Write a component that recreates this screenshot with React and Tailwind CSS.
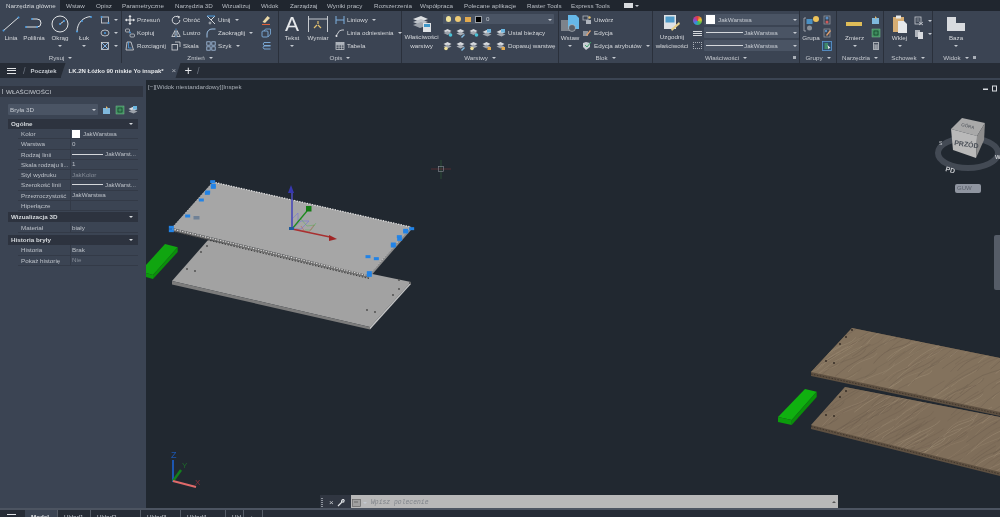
import React from "react";

const S = ({ w = 10, h = 10, vb, className = "", children }) => (
  <svg width={w} height={h} viewBox={vb || `0 0 ${w} ${h}`} className={"shrink-0 " + className} fill="none">{children}</svg>
);
const Caret = ({ className = "" }) => <span className={"inline-block w-0 h-0 border-x-[2px] border-x-transparent border-t-[2px] border-t-[#c5cad1] " + className} />;

const ic = {
  rect: <><rect x="1.5" y="2" width="7" height="6" stroke="#d5d8dc" strokeWidth=".8" /><circle cx="1.5" cy="2" r="1" fill="#4a9be0" /><circle cx="8.5" cy="8" r="1" fill="#4a9be0" /></>,
  ell: <><ellipse cx="5" cy="5" rx="4" ry="3" stroke="#d5d8dc" strokeWidth=".8" /><circle cx="5" cy="5" r="1" fill="#4a9be0" /></>,
  hatch: <><rect x="1.5" y="1.5" width="7" height="7" stroke="#d5d8dc" strokeWidth=".8" /><path d="M2 8l6-6M2 2l6 6" stroke="#7fb0e0" strokeWidth="1" /></>,
  move: <><path d="M5 .5v9M.5 5h9" stroke="#e5e7ea" strokeWidth="1.1" /><path d="M5 0l1.6 2H3.4zM5 10l1.6-2H3.4zM0 5l2-1.6v3.2zM10 5L8 3.4v3.2z" fill="#e5e7ea" /></>,
  copy: <><rect x=".5" y="1" width="4" height="3" rx="1" stroke="#d5d8dc" strokeWidth=".7" /><rect x="5" y="6" width="4.5" height="3" rx="1" stroke="#d5d8dc" strokeWidth=".7" /><circle cx="5" cy="4.5" r=".9" fill="#4a9be0" /></>,
  stretch: <><path d="M2 1h4l2.5 8H1z" stroke="#d5d8dc" strokeWidth=".8" /><path d="M3.5 1v6h3" stroke="#4a9be0" strokeWidth=".8" /></>,
  rotate: <><path d="M7.8 2.6A3.8 3.8 0 1 0 8.8 5" stroke="#d5d8dc" strokeWidth="1" /><path d="M6 .5l3 1-1 2.6z" fill="#d5d8dc" /></>,
  mirror: <><path d="M5 .5v9" stroke="#4a9be0" strokeWidth=".8" strokeDasharray="1.5 1" /><path d="M4 2.5v6H.8zM6 2.5v6h3.2z" stroke="#d5d8dc" strokeWidth=".8" /></>,
  scale: <><rect x="1" y="3.5" width="5.5" height="5.5" stroke="#d5d8dc" strokeWidth=".8" /><path d="M4 1h5v5" stroke="#d5d8dc" strokeWidth=".8" /></>,
  trim: <><path d="M1 1l4 4 4 4M9 1L5 5" stroke="#d5d8dc" strokeWidth="1" /><path d="M1 1h8" stroke="#4a9be0" strokeWidth="1" /><circle cx="4" cy="8" r="1" stroke="#d5d8dc" strokeWidth=".7" /></>,
  fillet: <path d="M1 9.5V6a5 5 0 0 1 5-5h3.5" stroke="#9fc2e6" strokeWidth="1" />,
  array: <><rect x=".8" y=".8" width="3.4" height="3.4" stroke="#a8c4e4" strokeWidth=".8" /><rect x="5.8" y=".8" width="3.4" height="3.4" stroke="#a8c4e4" strokeWidth=".8" /><rect x=".8" y="5.8" width="3.4" height="3.4" stroke="#a8c4e4" strokeWidth=".8" /><rect x="5.8" y="5.8" width="3.4" height="3.4" stroke="#a8c4e4" strokeWidth=".8" /></>,
  eraser: <><path d="M1.5 7l5-6 2.5 2-5 5z" fill="#ecd9a8" /><path d="M1 9.5h8" stroke="#e0603a" strokeWidth="1.1" /></>,
  cube: <><rect x="1" y="3" width="6" height="6" rx="1" stroke="#7fb0e0" strokeWidth=".9" /><path d="M3 3l1.5-2H9.5v5L7 9" stroke="#7fb0e0" strokeWidth=".8" /></>,
  off: <path d="M9.5 1.5H3a2 2 0 0 0 0 3h6.5M9.5 5H3a2 2 0 0 0 0 3h6.5" stroke="#7fb0e0" strokeWidth=".9" />,
  dimline: <><path d="M1 1v8M9 5H1" stroke="#7fb0e0" strokeWidth="1" /><path d="M9 1v8" stroke="#7fb0e0" strokeWidth="1" /></>,
  leader: <><path d="M1 8l2-3q1-3 4-3h2" stroke="#d5d8dc" strokeWidth=".9" /><circle cx="1.5" cy="8" r="1" fill="#e5e7ea" /></>,
  table: <><rect x="1" y="1.5" width="8" height="7" stroke="#d5d8dc" strokeWidth=".7" /><path d="M1 4h8M1 6.2h8M4 1.5v7M6.6 1.5v7" stroke="#d5d8dc" strokeWidth=".6" /><rect x="1" y="1.5" width="8" height="2.4" fill="#aeb4bc" /></>,
  block: <><rect x="1" y="1" width="5" height="4" stroke="#aeb4bc" strokeWidth=".8" /><rect x="4" y="5" width="5" height="4" fill="#aeb4bc" /><circle cx="7.5" cy="2.5" r="1.2" fill="#e2c070" /></>,
  blockEd: <><rect x="1" y="3" width="5" height="5" fill="#8f959d" /><path d="M4 7l4-5 1 1-4 5z" fill="#e0a070" /></>,
  attr: <><path d="M1 2l3-1 4 1v4l-4 3-3-3z" fill="#c9ced4" /><path d="M3 4l2 2 4-5" stroke="#3ea36a" strokeWidth="1" /></>,
  grpA: <><rect x="2" y="1" width="6" height="8" stroke="#8f959d" strokeWidth=".8" /><circle cx="5" cy="3" r="1.5" fill="#5a8fc4" /><circle cx="5" cy="7" r="1.5" fill="#d05a5a" /></>,
  grpB: <><rect x="2" y="1" width="6" height="8" stroke="#8f959d" strokeWidth=".8" /><path d="M4 7l4-5 1 1-4 5z" fill="#e0a070" /><circle cx="4" cy="3" r="1.2" fill="#5a8fc4" /></>,
  grpC: <><rect x=".5" y=".5" width="9" height="9" fill="#2f4d6b" stroke="#5b9ad6" strokeWidth=".8" /><rect x="2.5" y="2" width="3.5" height="6" fill="#3f8a6a" /><path d="M5.5 4l3 3-1.3.2-.7 1.4z" fill="#eee" /></>,
  idA: <><path d="M1 3h7v6H1z" fill="#7fb8dd" /><path d="M4 1l2 2-2 1z" fill="#e2b36a" /></>,
  idB: <><rect x="1" y="1" width="8" height="8" fill="#3c8a5c" stroke="#78c08f" strokeWidth=".5" /><path d="M3 3h4v4H3z" stroke="#16402a" strokeWidth=".7" /></>,
  calc: <><rect x="2" y="1" width="6" height="8" fill="#a8adb4" /><rect x="3" y="2" width="4" height="1.5" fill="#4a5260" /><path d="M3 5h4M3 7h4" stroke="#4a5260" strokeWidth=".8" strokeDasharray="1 .6" /></>,
  cutA: <><rect x="1" y="1" width="6" height="7" fill="none" stroke="#c8ccd2" strokeWidth=".8" /><path d="M2.5 3h3M2.5 5h3" stroke="#c8ccd2" strokeWidth=".6" /><path d="M5 6l4 3M9 6L5 9" stroke="#c8ccd2" strokeWidth=".8" /></>,
  cutB: <><rect x="1" y="1" width="5" height="7" fill="#aeb3ba" /><rect x="4" y="3" width="5" height="7" fill="#d8dbdf" /></>,
  layA: <><path d="M.5 3l4-2 4 2-4 2z" fill="#d8dbdf" /><path d="M.5 5l4-2 4 2-4 2z" fill="#9da3ab" /><circle cx="7.5" cy="7" r="1.8" fill="#49c2d6" /></>,
  layB: <><path d="M.5 3l4-2 4 2-4 2z" fill="#d8dbdf" /><path d="M.5 5.5l4-2 4 2-4 2z" fill="#a9aeb5" /><path d="M5 9l3-3 1 1-3 3z" fill="#7fb8dd" /></>,
  layC: <><path d="M.5 3l4-2 4 2-4 2z" fill="#d8dbdf" /><path d="M.5 5.5l4-2 4 2-4 2z" fill="#9da3ab" /><circle cx="3" cy="7.5" r="1.8" fill="#efe09a" /></>,
  layD: <><path d="M.5 3l4-2 4 2-4 2z" fill="#d8dbdf" /><path d="M.5 5.5l4-2 4 2-4 2z" fill="#9da3ab" /><rect x="5.5" y="6" width="3.5" height="3" fill="#e1a94e" /></>,
  layE: <><path d="M.5 4l4-2 5 2-4 2z" fill="#d8dbdf" /><path d="M.5 6.5l4-2 5 2-4 2z" fill="#9da3ab" /><rect x="5" y="1" width="4" height="3.5" fill="#6bb6e0" /></>,
};
const Ic = ({ n, w = 10, h = 10 }) => <S w={w} h={h} vb="0 0 10 10">{ic[n]}</S>;

const Small = ({ n, label, caret, className = "" }) => (
  <div className={"flex items-center h-[13px] " + className}>
    <Ic n={n} />
    {label && <span className="ml-[2px] whitespace-nowrap text-[#d4d7db]">{label}</span>}
    {caret && <Caret className="ml-[4px]" />}
  </div>
);
const Big = ({ icon, label, caret, className = "" }) => (
  <div className={"flex flex-col items-center shrink-0 " + className}>
    <div className="h-[19px] flex items-center justify-center">{icon}</div>
    <div className={"text-center text-[#d4d7db] whitespace-pre " + (label.includes("\n") ? "leading-[9px] -mt-[1px]" : "leading-[8.5px] mt-[1px]")}>{label}</div>
    {caret && <Caret className="mt-[2px]" />}
  </div>
);

const Panel = ({ className, title, dlg, children }) => (
  <div className={"shrink-0 flex flex-col h-full border-r border-[#2a303b] " + className}>
    <div className="h-[41px] flex pt-[3px] overflow-visible">{children}</div>
    <div className="h-[11px] flex items-center justify-center text-[#c5c9cf] relative">
      <span>{title}</span><Caret className="ml-[4px]" />
      {dlg && <span className="absolute right-[3px] top-[4px] w-[3px] h-[3px] bg-[#a9afb7]" />}
    </div>
  </div>
);

const Combo = ({ className = "", children }) => (
  <div className={"h-[11px] bg-[#4a5464] rounded-[1px] flex items-center relative text-[#c5cad1] " + className}>
    {children}
    <Caret className="absolute right-[2px] top-[4.5px]" />
  </div>
);
const Line = ({ className }) => <span className={"inline-block h-px bg-[#d5d8dc] " + className} />;

const Tabs = () => {
  const t = [["Narzędzia główne", "w-[60px]", true], ["Wstaw", "w-[30px]"], ["Opisz", "w-[26px]"], ["Parametryczne", "w-[53px]"], ["Narzędzia 3D", "w-[47px]"], ["Wizualizuj", "w-[39px]"], ["Widok", "w-[29px]"], ["Zarządzaj", "w-[37px]"], ["Wyniki pracy", "w-[47px]"], ["Rozszerzenia", "w-[46px]"], ["Współpraca", "w-[44px]"], ["Polecane aplikacje", "w-[63px]"], ["Raster Tools", "w-[44px]"], ["Express Tools", "w-[53px]"]];
  return (
    <div className="h-[11px] bg-[#20262f] flex shrink-0 text-[#b9bec5]">
      {t.map(([l, w, a]) => (
        <div key={l} className={"h-full pl-[6px] leading-[11px] whitespace-nowrap " + w + (a ? " bg-[#3b4453] text-[#d4d8dc]" : "")}>{l}</div>
      ))}
      <div className="flex items-center pl-[6px] gap-[2px]"><span className="w-[9px] h-[5px] bg-[#d8dbdf]" /><Caret /></div>
    </div>
  );
};

const Ribbon = () => (
  <div className="h-[52px] bg-[#3b4453] flex shrink-0 overflow-hidden">
    <Panel className="w-[122px]" title="Rysuj">
      <div className="flex w-[97px] pl-[1px]">
        <Big className="w-[20px]" label="Linia" icon={<S w={20} h={18}><path d="M2 16L18 2" stroke="#dfe2e5" /><circle cx="2.5" cy="15.5" r="1" fill="#4a9be0" /><circle cx="17.5" cy="2.5" r="1" fill="#4a9be0" /></S>} />
        <Big className="w-[26px]" label="Polilinia" icon={<S w={20} h={14}><path d="M2 10h11a4 4 0 0 0 0-8H8" stroke="#dfe2e5" /><circle cx="2" cy="10" r="1" fill="#4a9be0" /><circle cx="13" cy="10" r="1" fill="#4a9be0" /><circle cx="8" cy="2" r="1" fill="#4a9be0" /></S>} />
        <Big className="w-[26px]" label="Okrąg" caret icon={<S w={18} h={18}><circle cx="9" cy="9" r="8" stroke="#dfe2e5" /><path d="M9 9l4-3" stroke="#dfe2e5" /><circle cx="9" cy="9" r="1" fill="#4a9be0" /><circle cx="13" cy="6" r="1" fill="#4a9be0" /></S>} />
        <Big className="w-[20px] ml-[1px]" label="Łuk" caret icon={<S w={18} h={18}><path d="M2 17C2 8 8 2 16 1.5" stroke="#dfe2e5" /><circle cx="2" cy="16.5" r="1" fill="#4a9be0" /><circle cx="7" cy="6" r="1" fill="#4a9be0" /><circle cx="16" cy="2" r="1" fill="#4a9be0" /></S>} />
      </div>
      <div className="flex flex-col pl-[3px]">
        <Small n="rect" caret /><Small n="ell" caret /><Small n="hatch" caret />
      </div>
    </Panel>
    <Panel className="w-[157px]" title="Zmień">
      <div className="flex flex-col w-[48px] pl-[3px]">
        <Small n="move" label="Przesuń" /><Small n="copy" label="Kopiuj" /><Small n="stretch" label="Rozciągnij" />
      </div>
      <div className="flex flex-col w-[36px] pl-[1px]">
        <Small n="rotate" label="Obróć" /><Small n="mirror" label="Lustro" /><Small n="scale" label="Skala" />
      </div>
      <div className="flex flex-col w-[55px]">
        <Small n="trim" label="Utnij" caret /><Small n="fillet" label="Zaokrąglij" caret /><Small n="array" label="Szyk" caret />
      </div>
      <div className="flex flex-col">
        <Small n="eraser" /><Small n="cube" /><Small n="off" />
      </div>
    </Panel>
    <Panel className="w-[123px]" title="Opis">
      <Big className="w-[24px] ml-[1px]" label="Tekst" caret icon={<span className="text-[21px] leading-[19px] text-[#e6e8eb] font-['Liberation_Sans',sans-serif]">A</span>} />
      <Big className="w-[28px]" label="Wymiar" icon={<S w={22} h={18}><path d="M1.5 1v16M20.5 1v16M1.5 4h19" stroke="#d5d8dc" strokeWidth=".9" /><path d="M7 13l3-3M14 13l-3-3M11 9v-3" stroke="#e2c070" strokeWidth="1.2" /></S>} />
      <div className="flex flex-col pl-[3px]">
        <Small n="dimline" label="Liniowy" caret /><Small n="leader" label="Linia odniesienia" caret /><Small n="table" label="Tabela" />
      </div>
    </Panel>
    <Panel className="w-[157px]" title="Warstwy">
      <Big className="w-[39px]" label={"Właściwości\nwarstwy"} icon={<S w={20} h={20} className="-mt-[3px]"><path d="M1 7l8-3 7 3-8 3z" fill="#dcdfe2" /><path d="M1 10l8-3 7 3-8 3z" fill="#bcc1c7" /><path d="M1 13l8-3 7 3-8 3z" fill="#9da3ab" /><rect x="11" y="11" width="8" height="9" fill="#dfe2e5" /><rect x="12" y="12" width="6" height="3" fill="#3e97c9" /></S>} />
      <div className="flex flex-col ml-[2px]">
        <Combo className="w-[111px] bg-[#4a5464] gap-[3px] pl-[3px]">
          <span className="w-[5px] h-[6px] rounded-full bg-[#f1e39b]" />
          <span className="ml-[1px] w-[6px] h-[6px] rounded-full bg-[#eeca74]" />
          <span className="ml-[1px] w-[6px] h-[5px] bg-[#e1a94e]" />
          <span className="ml-[1px] w-[7px] h-[7px] bg-black border border-[#9aa0a8]" />
          <span className="ml-[1px]">0</span>
        </Combo>
        <div className="flex mt-[2px]">
          <div className="w-[64px] flex flex-col">
            <div className="flex h-[13px] items-center gap-[3px]"><Ic n="layA" /><Ic n="layB" /><Ic n="layA" /><Ic n="layE" /></div>
            <div className="flex h-[13px] items-center gap-[3px]"><Ic n="layC" /><Ic n="layB" /><Ic n="layC" /><Ic n="layD" /></div>
          </div>
          <div className="flex flex-col -ml-[11px]">
            <Small n="layE" label="Ustal bieżący" /><Small n="layD" label="Dopasuj warstwę" />
          </div>
        </div>
      </div>
    </Panel>
    <Panel className="w-[94px]" title="Blok">
      <Big className="w-[22px]" label="Wstaw" caret icon={<S w={18} h={18}><rect x="0" y="5" width="11" height="11" fill="#7d838b" /><path d="M7 0h8l3 3v11H7z" fill="#66b8e8" /><circle cx="11" cy="13" r="3.5" fill="#5a6069" stroke="#d5d8dc" strokeWidth=".5" /></S>} />
      <div className="flex flex-col pl-[1px]">
        <Small n="block" label="Utwórz" /><Small n="blockEd" label="Edycja" /><Small n="attr" label="Edycja atrybutów" caret />
      </div>
    </Panel>
    <Panel className="w-[147px]" title="Właściwości" dlg>
      <Big className="w-[38px]" label={"Uzgodnij\nwłaściwości"} icon={<S w={18} h={18} className="-mt-[2px]"><rect x="1" y="1" width="12" height="14" fill="#dfe2e5" /><rect x="2.5" y="2.5" width="9" height="6" fill="#4f9bc9" /><path d="M9 17l8-7-1-2-8 7z" fill="#e9d08a" /></S>} />
      <div className="flex flex-col w-[12px] items-center">
        <div className="h-[13px] flex items-center"><span className="w-[9px] h-[9px] rounded-full bg-[conic-gradient(#e04040,#e8c030,#40c050,#3090e0,#a040c0,#e04040)]" /></div>
        <div className="h-[13px] flex flex-col justify-center gap-[1px]"><Line className="w-[9px] block" /><Line className="w-[9px] block" /><Line className="w-[9px] block" /></div>
        <div className="h-[13px] flex items-center"><span className="w-[9px] h-[7px] border border-dotted border-[#a9afb7]" /></div>
      </div>
      <div className="flex flex-col gap-[2px] ml-[1px]">
        <Combo className="w-[95px] pl-[2px] gap-[3px]"><span className="w-[9px] h-[9px] bg-white" /><span>JakWarstwa</span></Combo>
        <Combo className="w-[95px] pl-[2px] gap-[1px]"><Line className="w-[37px]" /><span>JakWarstwa</span></Combo>
        <Combo className="w-[95px] pl-[2px] gap-[1px]"><Line className="w-[37px]" /><span>JakWarstwa</span></Combo>
      </div>
    </Panel>
    <Panel className="w-[37px]" title="Grupy">
      <Big className="w-[22px]" label="Grupa" icon={<S w={17} h={18}><path d="M3 3H1v13h2M13 3h2" stroke="#aeb3ba" strokeWidth=".8" /><rect x="3.5" y="4" width="6" height="5" fill="#4a90c4" /><circle cx="6.5" cy="13" r="2.5" fill="#8a9098" /><circle cx="13" cy="4" r="3" fill="#eec35a" /></S>} />
      <div className="flex flex-col">
        <div className="h-[13px] flex items-center"><Ic n="grpA" /></div>
        <div className="h-[13px] flex items-center"><Ic n="grpB" /></div>
        <div className="h-[13px] flex items-center"><Ic n="grpC" /></div>
      </div>
    </Panel>
    <Panel className="w-[47px]" title="Narzędzia">
      <Big className="w-[33px] ml-[1px]" label="Zmierz" caret icon={<S w={17} h={6}><rect width="16" height="4" y="1" fill="#e0bd58" /></S>} />
      <div className="flex flex-col">
        <div className="h-[13px] flex items-center"><Ic n="idA" /></div>
        <div className="h-[13px] flex items-center"><Ic n="idB" /></div>
        <div className="h-[13px] flex items-center"><Ic n="calc" /></div>
      </div>
    </Panel>
    <Panel className="w-[49px]" title="Schowek">
      <Big className="w-[29px] ml-[1px]" label="Wklej" caret icon={<S w={16} h={18}><rect x="1" y="2" width="11" height="15" fill="#d6ad73" /><rect x="4" y="0.5" width="5" height="3" fill="#e8e9ea" /><path d="M6 6h6l3 3v9H6z" fill="#e6e8ea" /></S>} />
      <div className="flex flex-col">
        <Small n="cutA" caret /><Small n="cutB" caret />
      </div>
    </Panel>
    <Panel className="w-[47px] pr-[1px] border-r-0" title="Widok" dlg>
      <Big className="w-[46px]" label="Baza" caret icon={<S w={18} h={14}><path d="M0 0h9v6h9v8H0z" fill="#d8dbdf" /></S>} />
    </Panel>
    <div className="flex-1" />
  </div>
);

const FileTabs = () => (
  <div className="shrink-0 h-[15px] bg-[#262c36] flex items-center relative">
    <div className="ml-[7px] w-[9px] flex flex-col gap-[1.5px]"><i className="block h-px bg-[#e2e4e7]" /><i className="block h-px bg-[#e2e4e7]" /><i className="block h-px bg-[#e2e4e7]" /></div>
    <span className="ml-[7px] text-[#6c7480] text-[9px]">/</span>
    <span className="ml-[5px] w-[30px] text-[#c5cad1] font-bold text-[6px] whitespace-nowrap">Początek</span>
    <div className="h-full w-[120px] bg-[#3b4453] flex items-center pl-[8px] text-[#e6e8eb] [clip-path:polygon(5px_0,100%_0,calc(100%-5px)_100%,0_100%)]">
      <span className="font-bold text-[6px] whitespace-nowrap w-[103px]">LK.2N Łóżko 90 niskie Yo inspak*</span>
      <span className="text-[#aeb3ba] text-[8px]">×</span>
    </div>
    <span className="ml-[4px] text-[#e6e8eb] text-[13px] leading-[13px]">+</span>
    <span className="ml-[5px] text-[#6c7480] text-[9px]">/</span>
  </div>
);

const Row = ({ k, v, dim, line, sw }) => (
  <div className="h-[10.25px] flex border-b border-[#333a47] text-[#bcc1c8]">
    <div className="w-[53px] pl-[3px] whitespace-nowrap overflow-hidden border-r border-[#333a47] leading-[10px]">{k}</div>
    <div className={"flex-1 pl-[1px] flex items-center whitespace-nowrap overflow-hidden " + (dim ? "text-[#878e99]" : "")}>
      {sw && <span className="w-[8px] h-[8px] bg-white mr-[3px]" />}
      {line && <Line className="w-[31px] mr-[2px]" />}
      {v}
    </div>
  </div>
);
const Sec = ({ t, className = "" }) => (
  <div className={"h-[10px] bg-[#2d333f] flex items-center justify-between pl-[3px] pr-[5px] font-bold text-[#d4d8dc] " + className}>
    <span>{t}</span><Caret className="border-t-[#d4d8dc] border-x-[2.5px]" />
  </div>
);

const Props = () => (
  <div className="w-[146px] shrink-0 bg-[#3b4453]">
    <div className="mt-[6px] mr-[3px] h-[11px] bg-[#303642] flex items-center pl-[2px] text-[#c5cad1]">
      <span className="w-px h-[5px] bg-[#8d939c] mr-[3px]" />WŁAŚCIWOŚCI
    </div>
    <div className="flex items-center mt-[7px] ml-[8px]">
      <Combo className="w-[90px] pl-[2px]">Bryła 3D</Combo>
      <div className="flex ml-[4px] gap-[3px]"><Ic n="idA" /><Ic n="idB" /><Ic n="layE" /></div>
    </div>
    <div className="ml-[8px] w-[130px] mt-[4px]">
      <Sec t="Ogólne" />
      <div className="ml-[10px]">
        <Row k="Kolor" v="JakWarstwa" sw />
        <Row k="Warstwa" v="0" />
        <Row k="Rodzaj linii" v="JakWarst..." line />
        <Row k="Skala rodzaju li..." v="1" />
        <Row k="Styl wydruku" v="JakKolor" dim />
        <Row k="Szerokość linii" v="JakWarst..." line />
        <Row k="Przezroczystość" v="JakWarstwa" />
        <Row k="Hiperłącze" v="" />
      </div>
      <Sec t="Wizualizacja 3D" className="mt-[1px]" />
      <div className="ml-[10px] mt-[1px]"><Row k="Materiał" v="biały" /></div>
      <Sec t="Historia bryły" className="mt-[2px]" />
      <div className="ml-[10px]">
        <Row k="Historia" v="Brak" />
        <Row k="Pokaż historię" v="Nie" dim />
      </div>
    </div>
  </div>
);

const grips = [[218, 35], [220, 52], [202, 70], [184, 90], [143, 138], [94, 172], [94, 182], [815, 176], [797, 181], [778, 200], [760, 222], [684, 260], [709, 266], [688, 308], [688, 316], [203, 66], [779, 208], [760, 228], [797, 186], [220, 46]].map(([x, y]) => [140 + x / 3, 170 + y / 3]);

function wood(seed, x0, x1, y0, y1) {
  const out = [];
  let r = seed;
  const rnd = () => ((r = (r * 9301 + 49297) % 233280) / 233280);
  for (let i = 0; i < 170; i++) {
    const x = x0 + rnd() * (x1 - x0), y = y0 + rnd() * (y1 - y0), l = 14 + rnd() * 26, b = rnd() * 5;
    out.push([`M${x} ${y}q${l * 0.35} ${-l * 0.45 + b} ${l * 0.8} ${-l * 0.55}t${l * 0.5} ${-l * 0.3}`, rnd() > 0.5 ? "#a8977f" : "#65574a", 0.2 + rnd() * 0.3]);
  }
  return out;
}
const w1 = wood(7, 790, 1000, 335, 440);
const w2 = wood(91, 790, 1000, 390, 500);

const Scene = () => (
  <svg width="854" height="428" viewBox="146 80 854 428" className="absolute inset-0" fill="none">
    <defs>
      <clipPath id="c1"><polygon points="852,328 1000,358 1000,412 811,372" /></clipPath>
      <clipPath id="c2"><polygon points="845,387 1000,417 1000,472 811,425" /></clipPath>
    </defs>
    <path d="M441 160v19" stroke="#2f5a36" strokeWidth=".7" />
    <path d="M431 169h20" stroke="#6b2f33" strokeWidth=".7" />
    <rect x="438.5" y="166.5" width="5" height="5" stroke="#8b9098" strokeWidth=".6" />
    <polygon points="208,240 411,282 370,327 172,281" fill="#a2a2a2" />
    <polygon points="172,281 370,327 370,329.5 172,284.5" fill="#7c7c7c" />
    <polygon points="370,327 411,282 411,284 370,329.5" fill="#c2c2c2" />
    {[[207, 246], [201, 252], [187, 269], [195, 271], [399, 289], [393, 295], [399, 280], [367, 310], [375, 312], [410, 283]].map(([x, y], i) => <circle key={i} cx={x} cy={y} r=".9" fill="#4a4a4a" />)}
    <polygon points="172,228 369,275 369,278 172,231" fill="#6d6d6d" />
    <polygon points="369,275 411,227 411,230 369,278" fill="#8d8d8d" />
    <polygon points="213,182 411,227 369,275 172,228" fill="#a6a6a6" />
    <path d="M213 182L411 227" stroke="#e6e6e6" strokeWidth="1.2" strokeDasharray="1.3 1.3" />
    <path d="M172 229L369 276" stroke="#e0e0e0" strokeWidth="1.1" strokeDasharray="1.3 1.3" />
    <path d="M172 231.5L369 278.5" stroke="#3a3a3a" strokeWidth="1" strokeDasharray="1.5 1.5" />
    <path d="M213 182L172 228M411 227L369 275" stroke="#d6d6d6" strokeWidth=".7" strokeDasharray="1.5 1" />
    <polygon points="165,244 177.7,247.3 153,275 146,273 146,265" fill="#10a510" />
    <polygon points="177.7,247.3 177.7,252 153,279 153,275" fill="#0b8f0b" />
    <polygon points="146,273 153,275 153,279 146,277" fill="#0c990c" />
    <path d="M292 229l9-8h8l-8 8z M292 229v-10l6-6v9" stroke="#6a6ae0" strokeWidth=".5" />
    <path d="M300 218l7 8 8-1M305 230l6 0 5-7" stroke="#55b055" strokeWidth=".5" />
    <path d="M296 229l13 3 5-7M305 232l-4 -6" stroke="#c05050" strokeWidth=".5" />
    <path d="M292 228V190" stroke="#4a4ab8" strokeWidth="1.6" />
    <path d="M291 185l3 8h-6z" fill="#3838b0" />
    <path d="M292 229L307 211" stroke="#1f8a1f" strokeWidth="1.3" />
    <rect x="306" y="206" width="5.5" height="5.5" fill="#137d13" />
    <path d="M292 229L330 237" stroke="#a83030" strokeWidth="1.3" />
    <path d="M337 239l-8 -4v6z" fill="#a02525" />
    <rect x="289" y="227" width="5" height="3" fill="#1f5a9a" />
    {grips.map(([x, y], i) => <rect key={i} x={x - 2.5} y={y - 1.5} width="5" height="3" fill="#2283e6" />)}
    <rect x="193.5" y="216" width="6" height="3.5" fill="#6f8196" />
    <polygon points="845,387 1000,417 1000,476 811,429 811,426" fill="#5e5041" />
    <polygon points="845,387 1000,417 1000,472 811,425" fill="#7f6e5a" />
    <g clipPath="url(#c2)">{w2.map(([d, c, o], i) => <path key={i} d={d} stroke={c} strokeOpacity={o} strokeWidth=".8" />)}</g>
    <path d="M811 426.5L1000 474" stroke="#3f352b" strokeWidth="1" strokeDasharray="1.5 1.5" />
    <polygon points="852,328 1000,358 1000,416 811,376 811,372" fill="#5e5041" />
    <polygon points="852,328 1000,358 1000,412 811,372" fill="#83725d" />
    <g clipPath="url(#c1)">{w1.map(([d, c, o], i) => <path key={i} d={d} stroke={c} strokeOpacity={o} strokeWidth=".8" />)}</g>
    <path d="M811 374L1000 414" stroke="#3f352b" strokeWidth="1" strokeDasharray="1.5 1.5" />
    {[[852, 330], [846, 337], [840, 344], [826, 361], [834, 363], [846, 391], [840, 397], [826, 415], [834, 416]].map(([x, y], i) => <circle key={i} cx={x} cy={y} r=".9" fill="#2e2620" />)}
    <polygon points="805,389 816.7,391.7 791.7,420 778,417" fill="#10b010" />
    <polygon points="816.7,391.7 816.7,397 791.7,425 791.7,420" fill="#0a8f0a" />
    <polygon points="778,417 791.7,420 791.7,425 778,422" fill="#0c9c0c" />
    <path d="M173 482V460" stroke="#1c56b0" strokeWidth="2" />
    <path d="M173 481L181 470" stroke="#13801c" strokeWidth="2.5" />
    <path d="M173 481L196 487" stroke="#e06a6a" strokeWidth="2" />
    <text x="171" y="458" fontSize="9" fill="#1c56b0" fontFamily="Liberation Sans, sans-serif">Z</text>
    <text x="182" y="468" fontSize="8" fill="#1d6a2a" fontFamily="Liberation Sans, sans-serif">Y</text>
    <text x="195" y="485" fontSize="8" fill="#8a2f38" fontFamily="Liberation Sans, sans-serif">X</text>
    <ellipse cx="968" cy="153" rx="30" ry="15" stroke="#434a54" strokeWidth="6" />
    <polygon points="962,118 985,123 977,136 951,129" fill="#a9a9a9" />
    <polygon points="951,129 977,136 976,158 953,150" fill="#b9b9b9" />
    <polygon points="977,136 985,123 984,140 976,158" fill="#8d8d8d" />
    <text x="954" y="145" fontSize="7" fontWeight="700" fill="#4a4f57" fontFamily="Liberation Sans, sans-serif" transform="rotate(8 954 145)">PRZÓD</text>
    <text x="961" y="126" fontSize="4.5" fill="#4a4f57" fontFamily="Liberation Sans, sans-serif" transform="rotate(14 961 126)">GÓRA</text>
    <text x="945" y="171" fontSize="7" fontWeight="700" fill="#c9ccd0" fontFamily="Liberation Sans, sans-serif" transform="rotate(15 945 171)">PD</text>
    <text x="939" y="145" fontSize="5" fill="#c9ccd0" fontFamily="Liberation Sans, sans-serif">S</text>
    <text x="995" y="159" fontSize="6" fontWeight="700" fill="#c9ccd0" fontFamily="Liberation Sans, sans-serif">W</text>
    <rect x="983" y="88.5" width="5" height="1.5" fill="#d8dbdf" />
    <rect x="992.5" y="86" width="4" height="5" fill="none" stroke="#d8dbdf" />
  </svg>
);

const Viewport = () => (
  <div className="relative flex-1 bg-[#212830] overflow-hidden">
    <Scene />
    <div className="absolute left-[2px] top-[3px] text-[#aab0b8] whitespace-nowrap">[−][Widok niestandardowy][Inspek</div>
    <div className="absolute left-[809px] top-[104px] w-[26px] h-[9px] rounded-[2px] bg-[#8f95a0] text-[#585e68] text-[6px] leading-[9px] pl-[2px]">GUW</div>
    <div className="absolute right-0 top-[155px] w-[6px] h-[55px] rounded-l-[2px] bg-[#555c67]" />
    <div className="absolute left-[174px] bottom-[-2px] w-[31px] h-[15px] bg-[#303641] flex items-center text-[#c9ccd0] gap-[3px] pl-[1px]">
      <span className="w-[2px] h-[9px] border-x border-dotted border-[#8d939c]" />
      <span className="text-[8px] leading-none ml-[3px]">×</span>
      <S w={8} h={8}><path d="M1 7l4-4M7 .5a2 2 0 0 0-2.3 2.6l2-.2.6-2.2" stroke="#dfe2e5" strokeWidth="1.2" /></S>
    </div>
    <div className="absolute left-[205px] bottom-[-2px] w-[487px] h-[15px] bg-[#b8b8b8] flex items-center pl-[1px]">
      <S w={10} h={8}><rect x=".5" y=".5" width="8" height="7" fill="#a0a0a0" stroke="#666" strokeWidth=".7" /><path d="M2 3h4" stroke="#555" strokeWidth=".7" /></S>
      <Caret className="ml-[1px] border-t-[#444]" />
      <span className="ml-[4px] font-['Liberation_Mono',monospace] text-[6.4px] text-[#7f8389] italic">Wpisz polecenie</span>
      <span className="absolute right-[2px] top-[6px] w-0 h-0 border-x-[2px] border-x-transparent border-b-[2px] border-b-[#555]" />
    </div>
  </div>
);

const Status = () => {
  const seps = [["Model", "w-[33px] bg-[#3b4453] text-[#e2e4e7] font-bold"], ["Układ1", "w-[33px]"], ["Układ2", "w-[50px]"], ["Układ3", "w-[40px]"], ["Układ4", "w-[45px]"], ["Ukł", "w-[18px]"], ["+", "w-[19px]"]];
  return (
    <div className="shrink-0 h-[7px] bg-[#262c36] flex items-start overflow-hidden">
      <div className="ml-[7px] mt-[4px] w-[9px] h-px bg-[#e2e4e7] mr-[9px]" />
      {seps.map(([l, c]) => <div key={l} className={"h-full pl-[6px] pt-[3px] text-[#c5cad1] leading-[8px] border-r border-[#555c67] overflow-hidden " + c}>{l}</div>)}
    </div>
  );
};

export default function App() {
  return (
    <div className="w-[1000px] h-[517px] overflow-hidden flex flex-col bg-[#212830] text-[6.25px] leading-[8px] blur-[0.25px] font-['Liberation_Sans',sans-serif]">
      <Tabs />
      <Ribbon />
      <FileTabs />
      <div className="h-[2px] bg-[#3b4453] shrink-0" />
      <div className="flex-1 flex min-h-0 overflow-hidden"><Props /><Viewport /></div>
      <div className="h-[2px] bg-[#4c5461] shrink-0" />
      <Status />
    </div>
  );
}
